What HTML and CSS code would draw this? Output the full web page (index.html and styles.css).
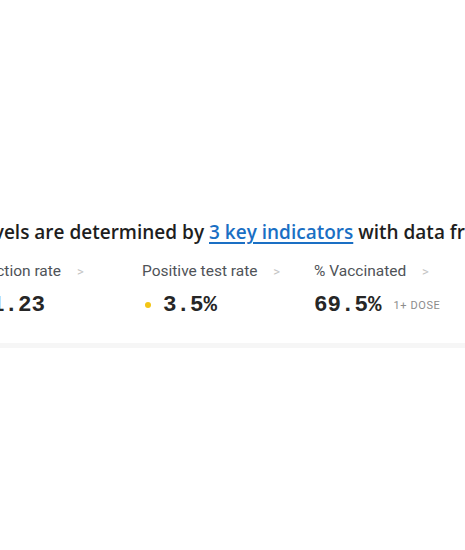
FILE: index.html
```html
<!DOCTYPE html>
<html>
<head>
<meta charset="utf-8">
<link rel="stylesheet" href="styles.css">
</head>
<body>
<div class="page">
  <section class="card">
    <p class="intro">Risk levels are determined by <a href="#" class="link">3 key indicators</a> with data from the CDC</p>
    <div class="metrics">
      <div class="metric">
        <div class="label">Infection rate <span class="chev">&gt;</span></div>
        <div class="value"><span class="dot"></span><span class="num">1.23</span></div>
      </div>
      <div class="metric">
        <div class="label">Positive test rate <span class="chev">&gt;</span></div>
        <div class="value"><span class="dot"></span><span class="num">3.5%</span></div>
      </div>
      <div class="metric">
        <div class="label">% Vaccinated <span class="chev">&gt;</span></div>
        <div class="value"><span class="num">69.5%</span><span class="dose">1+ DOSE</span></div>
      </div>
    </div>
  </section>
  <div class="divider"></div>
</div>
</body>
</html>
```

FILE: styles.css
```css
html, body {
  margin: 0;
  padding: 0;
  background: #ffffff;
  overflow: hidden;
}
.page {
  width: 465px;
  height: 550px;
  overflow: hidden;
  padding-top: 218px;
  box-sizing: border-box;
}
.card {
  margin-left: -30px;
  width: 700px;
}
.intro {
  margin: 0;
  font-family: "Open Sans", sans-serif;
  font-weight: 600;
  font-size: 19px;
  line-height: 28px;
  color: #1e1e1e;
  white-space: nowrap;
  text-indent: -35px;
}
.link {
  color: #1a6fc4;
  text-decoration: underline;
  text-underline-offset: 3px;
  text-decoration-thickness: 1.5px;
}
.metrics {
  display: flex;
  margin-top: 15px;
}
.metric {
  width: 172px;
  flex: none;
}
.label {
  font-family: Roboto, sans-serif;
  font-size: 15.5px;
  line-height: 20px;
  color: #4f5358;
  white-space: nowrap;
}
.chev {
  color: #c4c4c4;
  margin-left: 12px;
  font-size: 13px;
}
.value {
  display: flex;
  align-items: center;
  margin-top: 11px;
  height: 24px;
}
.dot {
  width: 6px;
  height: 6px;
  border-radius: 50%;
  background: #f3c515;
  margin-left: 3px;
  margin-right: 12px;
}
.num {
  font-family: "Liberation Mono", monospace;
  font-weight: 700;
  font-size: 22.5px;
  color: #262626;
}
.dose {
  font-family: Roboto, sans-serif;
  font-size: 11px;
  letter-spacing: 0.6px;
  color: #8c8c8c;
  margin-left: 12px;
}
.divider {
  margin-top: 26px;
  height: 5px;
  background: #f6f6f6;
}
```
